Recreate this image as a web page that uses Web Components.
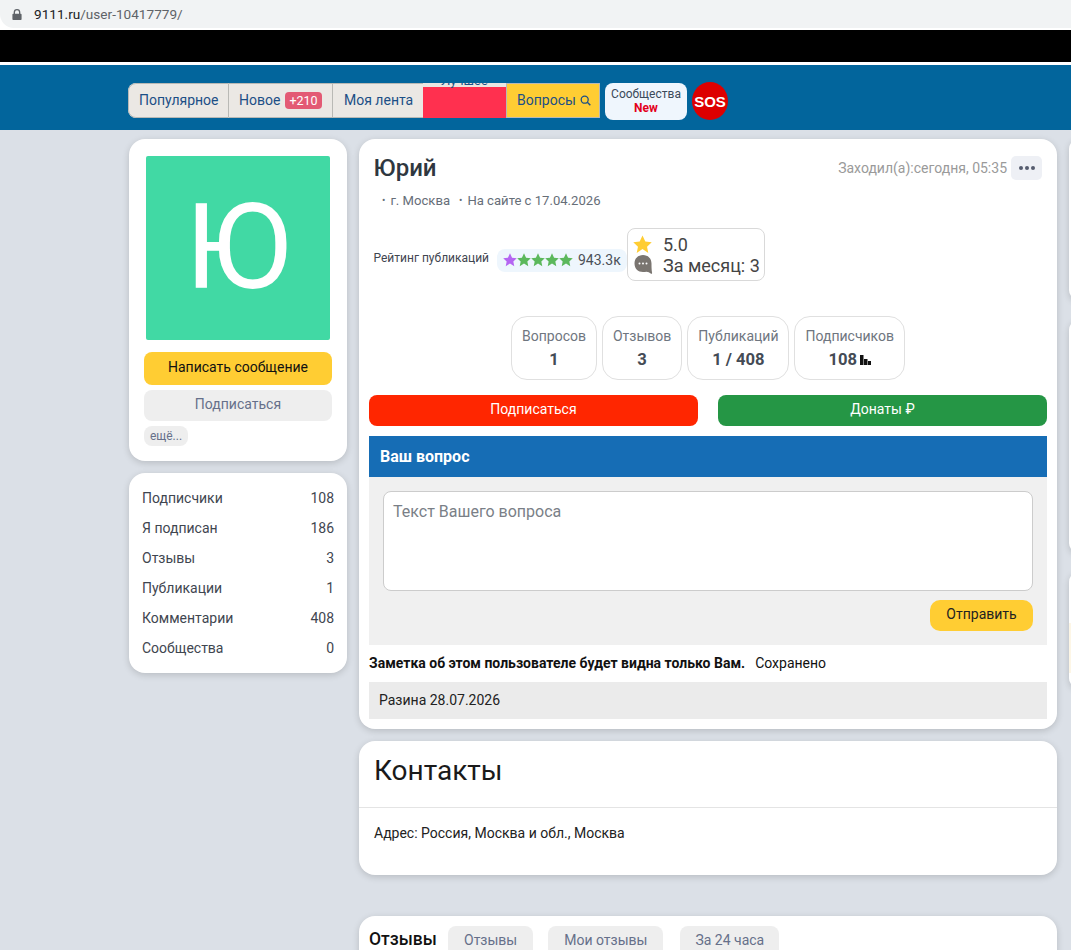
<!DOCTYPE html>
<html lang="ru">
<head>
<meta charset="utf-8">
<title>Юрий</title>
<style>
    html, body { margin: 0; padding: 0; height: 950px; overflow: hidden; }
    body { background: #dbe0e7; font-family: Roboto, "Liberation Sans", sans-serif; color: #333; }
    .page { display: flex; align-items: flex-start; gap: 12px; padding: 9px 0 0 129px; height: 820px; box-sizing: border-box; overflow: hidden; }
    .col-left { display: flex; flex-direction: column; gap: 12px; width: 218px; flex: none; }
    .col-main { display: flex; flex-direction: column; width: 698px; flex: none; }
    .col-right { display: flex; flex-direction: column; flex: 1; min-width: 0; }
    .col-left > *, .col-main > * { flex: none; }
</style>
</head>
<body>

<browser-bar url-host="9111.ru" url-path="/user-10417779/"></browser-bar>
<black-strip></black-strip>
<site-header></site-header>

<div class="page">
    <div class="col-left">
        <profile-card></profile-card>
        <stats-card></stats-card>
    </div>
    <div class="col-main">
        <user-card></user-card>
        <contacts-card></contacts-card>
        <reviews-card></reviews-card>
    </div>
    <div class="col-right">
        <side-stub h="161"></side-stub>
        <side-stub h="233" mt="20"></side-stub>
        <side-stub h="116" mt="19" tint="1"></side-stub>
    </div>
</div>

<script>
const STAR = "M12 2l3.1 6.6 7.1.9-5.2 4.9 1.4 7.1L12 17.1 5.6 21.5 7 14.4 1.8 9.5l7.1-.9z"
const SHADOW = "0 2px 7px rgba(0,0,0,.16)"

class BrowserBar extends HTMLElement{
    constructor(){
        super()
        this.attachShadow({ mode: "open" })
    }
    connectedCallback(){
        this.shadowRoot.innerHTML = `
        <style>
            :host { display: block; height: 30px; background: #fff; }
            .pill {
                height: 28px; background: #f1f3f4; border-radius: 0 0 0 14px;
                display: flex; align-items: center; padding-left: 12px;
                font: 13.6px Roboto, sans-serif; color: #5f6368; gap: 12px;
            }
            b { font-weight: 400; color: #202124; }
        </style>
        <div class="pill">
            <svg width="10" height="13" viewBox="0 0 12 14"><path fill="#5f6368" d="M2 6V4.300a4 4 0 0 1 8 0V6h.6c.5 0 .9.4.9.9v5.700c0 .5-.4.9-.9.9H1.400c-.5 0-.9-.4-.9-.9V6.900c0-.5.4-.9.9-.9zm1.600 0h4.800V4.300a2.400 2.400 0 0 0-4.800 0z"/></svg>
            <span><b>${this.getAttribute("url-host")}</b>${this.getAttribute("url-path")}</span>
        </div>`
    }
}
customElements.define("browser-bar", BrowserBar)

class BlackStrip extends HTMLElement{
    constructor(){
        super()
        this.attachShadow({ mode: "open" }).innerHTML = `
        <style>
            :host { display: block; height: 32px; background: #000; border-bottom: 3px solid #fff; }
        </style>`
    }
}
customElements.define("black-strip", BlackStrip)

class SiteHeader extends HTMLElement{
    constructor(){
        super()
        this.attachShadow({ mode: "open" }).innerHTML = `
        <style>
            :host { display: block; height: 65px; background: #02659c; }
            .row { display: flex; align-items: flex-start; padding: 17px 0 0 128px; }
            nav {
                display: flex; height: 35px; margin-top: 1px; font-size: 14px; color: #1c4f86;
                border-radius: 8px 0 0 8px; overflow: hidden; background: #ebe8e4;
            }
            nav > div {
                display: flex; align-items: center; box-sizing: border-box; flex: none; padding-bottom: 1px;
                padding-left: 10px; border: solid #b9b9b5; border-width: 1px 1px 1px 0; white-space: nowrap;
            }
            nav .pop { width: 101px; border-left-width: 1px; border-radius: 8px 0 0 8px; }
            .fresh { width: 104px; }
            nav .feed { width: 90px; padding-left: 11px; border-right: 0; }
            .badge { background: #e35a74; color: #fff; border-radius: 4px; font-size: 12.5px; padding: 1px 4px; margin-left: 5px; line-height: 15px; }
            nav .best { width: 83px; padding: 0; border: 0; background: #ff304f; position: relative; overflow: hidden; }
            .best span {
                position: absolute; left: 0; right: 0; top: -9px; height: 13px; background: #e9e6e2;
                text-align: center; font-size: 13px; line-height: 13px; color: #1c4f86;
            }
            nav .q { background: #ffcd33; width: 94px; padding-left: 10px; border-width: 1px; }
            .q svg { margin-left: 4px; }
            .comm {
                margin: 1px 0 0 5px; width: 82px; height: 37px; padding-bottom: 2px; box-sizing: border-box; background: #eff6fd; border-radius: 8px;
                display: flex; flex-direction: column; align-items: center; justify-content: center;
                font-size: 12px; line-height: 14px; color: #3b4a5a;
            }
            .comm b { color: #e3001b; font-weight: 700; }
            .sos {
                margin-left: 5px; width: 36px; height: 38px; border-radius: 50%; background: #dd0000; color: #fff;
                display: flex; align-items: center; justify-content: center; font: 700 15px "Liberation Sans", sans-serif;
            }
        </style>
        <div class="row">
            <nav>
                <div class="pop">Популярное</div>
                <div class="fresh">Новое<span class="badge">+210</span></div>
                <div class="feed">Моя лента</div>
                <div class="best"><span>Лучшее</span></div>
                <div class="q">Вопросы<svg width="11" height="11" viewBox="0 0 11 11"><circle cx="4.700" cy="4.700" r="3.500" fill="none" stroke="#1c4f86" stroke-width="1.300"/><path d="M7.300 7.300l3 3" stroke="#1c4f86" stroke-width="1.400"/></svg></div>
            </nav>
            <div class="comm">Сообщества<b>New</b></div>
            <div class="sos">SOS</div>
        </div>`
    }
}
customElements.define("site-header", SiteHeader)

class ProfileCard extends HTMLElement{
    constructor(){
        super()
        this.attachShadow({ mode: "open" }).innerHTML = `
        <style>
            :host {
                display: block; background: #fff; border-radius: 16px; height: 322px; box-sizing: border-box;
                box-shadow: ${SHADOW}; padding: 17px 15px 0;
            }
            .ava {
                width: 184px; height: 184px; margin-left: 2px; background: #41d9a4; color: #fff; border-radius: 2px;
                display: flex; align-items: center; justify-content: center; font-size: 118px; font-weight: 400;
            }
            .btn { border-radius: 8px; display: flex; align-items: center; justify-content: center; font-size: 14px; box-sizing: border-box; padding-bottom: 3px; }
            .write { margin-top: 12px; height: 33px; background: #ffcd33; color: #111; }
            .sub { margin-top: 5px; height: 31px; background: #eee; color: #66708a; }
            .more {
                margin-top: 5px; width: 44px; height: 20px; border-radius: 8px; background: #eee; color: #66708a;
                font-size: 12px; display: flex; align-items: center; justify-content: center;
            }
        </style>
        <div class="ava">Ю</div>
        <div class="btn write">Написать сообщение</div>
        <div class="btn sub">Подписаться</div>
        <div class="more">ещё...</div>`
    }
}
customElements.define("profile-card", ProfileCard)

class StatsCard extends HTMLElement{
    constructor(){
        super()
        const rows = [["Подписчики", 108], ["Я подписан", 186], ["Отзывы", 3], ["Публикации", 1], ["Комментарии", 408], ["Сообщества", 0]]
        this.attachShadow({ mode: "open" }).innerHTML = `
        <style>
            :host {
                display: block; background: #fff; border-radius: 16px; box-sizing: border-box; height: 200px;
                box-shadow: ${SHADOW}; padding: 10px 13px;
            }
            div { display: flex; justify-content: space-between; height: 30px; align-items: center; font-size: 14px; color: #3f4650; }
        </style>
        ${rows.map(r => `<div><span>${r[0]}</span><span>${r[1]}</span></div>`).join("")}`
    }
}
customElements.define("stats-card", StatsCard)

class StatBox extends HTMLElement{
    constructor(){
        super()
        this.attachShadow({ mode: "open" }).innerHTML = `
        <style>
            :host {
                display: flex; flex-direction: column; align-items: center; box-sizing: border-box; height: 64px; padding: 11px 10px 0;
                border: 1px solid #e0e0e0; border-radius: 16px; font-size: 14px; color: #6f7680;
            }
            .v { margin-top: 6px; font-weight: 700; font-size: 16.6px; color: #444b55; display: flex; align-items: center; gap: 3px; }
        </style>
        <span><slot name="label"></slot></span>
        <span class="v"><slot></slot></span>`
    }
}
customElements.define("stat-box", StatBox)

class UserCard extends HTMLElement{
    constructor(){
        super()
        const stars = ["#b565f2", "#5cb85c", "#5cb85c", "#5cb85c", "#5cb85c"].map(c =>
            `<svg width="14" height="14" viewBox="1.5 1.5 21 21"><path fill="${c}" d="${STAR}"/></svg>`).join("")
        this.attachShadow({ mode: "open" }).innerHTML = `
        <style>
            :host {
                display: block; background: #fff; border-radius: 16px; height: 590px; box-sizing: border-box;
                box-shadow: ${SHADOW}; padding: 0 10px;
            }
            .top { display: flex; justify-content: space-between; align-items: center; padding: 16px 5px 0 4.5px; height: 26px; }
            h1 { margin: 0; font-size: 24px; font-weight: 500; color: #2f3740; }
            .seen { display: flex; align-items: center; gap: 4px; color: #9a9a9a; font-size: 14px; }
            .dots { width: 31px; height: 24px; border-radius: 5px; background: #eef0f5; display: flex; align-items: center; justify-content: center; gap: 2px; }
            .dots i { width: 4px; height: 4px; border-radius: 50%; background: #555c6e; }
            .meta { display: flex; gap: 9px; padding: 12px 0 0 13px; font-size: 13.1px; color: #666e78; line-height: 15px; }
            .meta span::before { content: "•"; font-size: 10px; margin-right: 5px; vertical-align: 1px; }
            .rate { display: flex; align-items: center; padding: 20px 0 0 4.5px; height: 53px; }
            .rate .lbl { font-size: 12px; color: #3f4650; width: 123.5px; flex: none; margin-top: 7px; }
            .pill { display: flex; align-items: center; height: 23px; background: #eef6fd; border-radius: 8px; padding: 0 6px; font-size: 14px; color: #4a5058; box-sizing: border-box; width: 130px; flex: none; margin-top: 11px; }
            .pill svg { flex: none; }
            .pill span { margin-left: 5px; }
            .rbox {
                border: 1px solid #d9d9d9; border-radius: 8px; width: 138px; height: 53px; box-sizing: border-box; font-size: 18px; color: #444;
                display: grid; grid-template-columns: 30px auto; grid-auto-rows: 21px; align-items: center; align-content: center; padding-left: 5px;
            }
            .stats { display: flex; justify-content: center; gap: 5px; margin-top: 35px; }
            .acts { display: flex; gap: 20px; margin-top: 15px; }
            .acts div { flex: 1; height: 31px; border-radius: 8px; color: #fff; font-size: 14px; display: flex; align-items: center; justify-content: center; box-sizing: border-box; padding-bottom: 3px; }
            .red { background: #ff2600; }
            .green { background: #259645; }
            .qhead { margin-top: 10px; height: 41px; background: #166db5; color: #fff; font-weight: 700; font-size: 16px; display: flex; align-items: center; padding: 0 0 1px 11px; box-sizing: border-box; }
            .qbody { background: #f0f0f0; height: 168px; padding: 14px 14px 0; box-sizing: border-box; }
            .ta { height: 100px; background: #fff; border: 1px solid #ccc; border-radius: 8px; box-sizing: border-box; padding: 10px 9px; font-size: 16px; color: #7a7f87; }
            .send { margin: 9px 0 0 auto; width: 103px; height: 31px; box-sizing: border-box; padding-bottom: 3px; border-radius: 10px; background: #ffcd33; color: #222; font-size: 14px; display: flex; align-items: center; justify-content: center; }
            .note { display: flex; gap: 10px; height: 37px; padding-bottom: 2px; box-sizing: border-box; align-items: center; font-size: 14px; color: #111; }
            .note b { font-weight: 700; }
            .razina { height: 37px; box-sizing: border-box; padding: 0 0 2px 10px; background: #ebebeb; display: flex; align-items: center; font-size: 14px; color: #222; }
        </style>
        <div class="top">
            <h1>Юрий</h1>
            <div class="seen">Заходил(а):сегодня, 05:35<span class="dots"><i></i><i></i><i></i></span></div>
        </div>
        <div class="meta"><span>г. Москва</span><span>На сайте с 17.04.2026</span></div>
        <div class="rate">
            <span class="lbl">Рейтинг публикаций</span>
            <span class="pill">${stars}<span>943.3к</span></span>
            <div class="rbox">
                <svg width="19" height="19" viewBox="1.5 1.5 21 21"><path fill="#ffcd33" d="${STAR}"/></svg><span>5.0</span>
                <svg width="20" height="22" viewBox="0 0 20 22"><path fill="#7a7570" d="M10 1c5 0 8.500 3.500 8.500 8.500 0 3 0 6 .6 9.500.1.800-.4 1-1 .7-1.600-.9-3-1.900-4.600-1.900-1 .2-2.300.2-3.500.2C5 18 1.500 14.500 1.500 9.500S5 1 10 1z"/><circle cx="6.500" cy="9.500" r="1" fill="#fff"/><circle cx="10" cy="9.500" r="1" fill="#fff"/><circle cx="13.500" cy="9.500" r="1" fill="#fff"/></svg><span>За месяц: 3</span>
            </div>
        </div>
        <div class="stats">
            <stat-box><span slot="label">Вопросов</span>1</stat-box>
            <stat-box><span slot="label">Отзывов</span>3</stat-box>
            <stat-box><span slot="label">Публикаций</span>1 / 408</stat-box>
            <stat-box><span slot="label">Подписчиков</span>108<svg width="11" height="10" viewBox="0 0 11 10"><path fill="#111" d="M0 0h3.500v10H0zM4 4h3.500v6H4zM8 6h3v4H8z"/></svg></stat-box>
        </div>
        <div class="acts"><div class="red">Подписаться</div><div class="green">Донаты ₽</div></div>
        <div class="qhead">Ваш вопрос</div>
        <div class="qbody">
            <div class="ta">Текст Вашего вопроса</div>
            <div class="send">Отправить</div>
        </div>
        <div class="note"><b>Заметка об этом пользователе будет видна только Вам.</b><span>Сохранено</span></div>
        <div class="razina">Разина 28.07.2026</div>`
    }
}
customElements.define("user-card", UserCard)

class ContactsCard extends HTMLElement{
    constructor(){
        super()
        this.attachShadow({ mode: "open" }).innerHTML = `
        <style>
            :host {
                display: block; margin-top: 12px; background: #fff; border-radius: 16px; height: 134px; box-sizing: border-box;
                box-shadow: ${SHADOW};
            }
            h2 { margin: 0; height: 67px; box-sizing: border-box; padding: 13px 15px 0; font-size: 28px; font-weight: 400; color: #1a1a1a; border-bottom: 1px solid #e4e4e4; }
            p { margin: 0; padding: 17px 15px; font-size: 14px; color: #222; }
        </style>
        <h2>Контакты</h2>
        <p>Адрес: Россия, Москва и обл., Москва</p>`
    }
}
customElements.define("contacts-card", ContactsCard)

class ReviewsCard extends HTMLElement{
    constructor(){
        super()
        this.attachShadow({ mode: "open" }).innerHTML = `
        <style>
            :host {
                display: flex; align-items: flex-start; margin-top: 41px; background: #fff; border-radius: 16px 16px 0 0; height: 60px; box-sizing: border-box;
                box-shadow: ${SHADOW}; padding: 10px 0 0 10px;
            }
            b { font-size: 17.5px; font-weight: 500; color: #111; margin-top: 3px; width: 79px; flex: none; }
            span { display: block; background: #eee; border-radius: 8px 8px 0 0; height: 30px; box-sizing: border-box; padding: 6px 16px 0; margin-right: 15px; font-size: 14px; color: #66708a; }
            span:last-child { margin-left: 2px; padding: 6px 15px 0; }
        </style>
        <b>Отзывы</b><span>Отзывы</span><span>Мои отзывы</span><span>За 24 часа</span>`
    }
}
customElements.define("reviews-card", ReviewsCard)

class SideStub extends HTMLElement{
    connectedCallback(){
        const root = this.shadowRoot || this.attachShadow({ mode: "open" })
        // last stub has a cream block inside, only its edge is on screen
        const bg = this.hasAttribute("tint")
            ? "linear-gradient(#fff 51px, #fdf6e6 51px, #fdf6e6 101px, #fff 101px)"
            : "#fff"
        root.innerHTML = `
        <style>
            :host {
                display: block; box-sizing: border-box; width: 60px; flex: none; background: ${bg}; border-radius: 10px;
                box-shadow: ${SHADOW};
                height: ${this.getAttribute("h")}px; margin-top: ${this.getAttribute("mt") || 0}px;
            }
        </style>`
    }
}
customElements.define("side-stub", SideStub)
</script>
</body>
</html>
